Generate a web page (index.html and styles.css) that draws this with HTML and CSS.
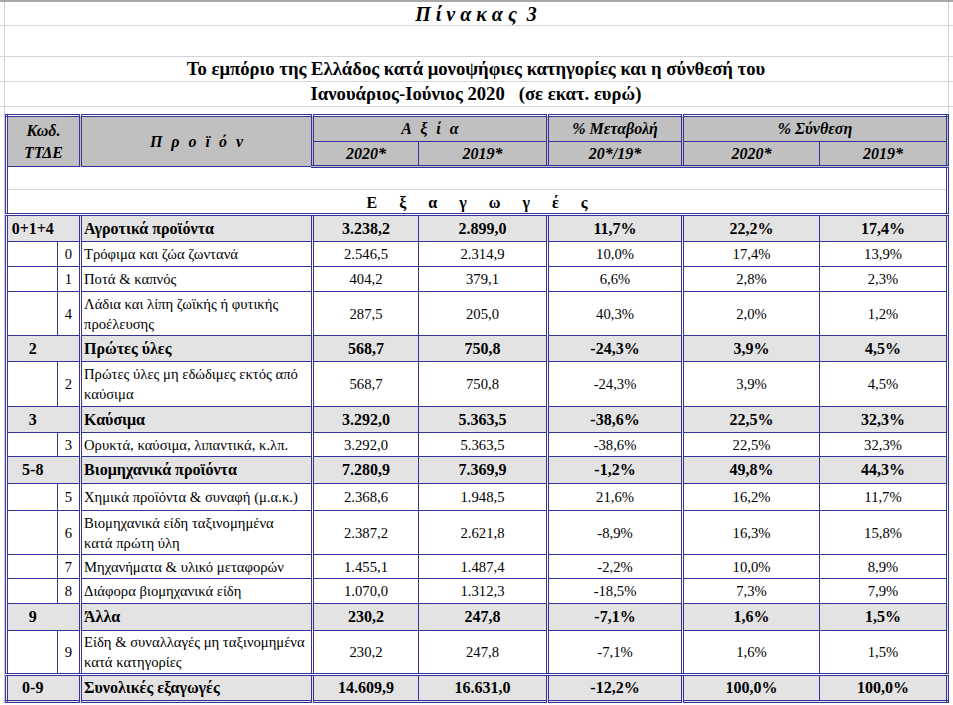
FILE: index.html
```html
<!DOCTYPE html>
<html lang="el">
<head>
<meta charset="UTF-8">
<title>Πίνακας 3</title>
<link rel="stylesheet" href="styles.css">
</head>
<body>
<div class="sheet-row r1"><span class="caption">Π ί ν α κ α ς&nbsp; 3</span></div>
<div class="sheet-row r2"></div>
<div class="sheet-row r3"><span class="title">Το εμπόριο της Ελλάδος κατά μονοψήφιες κατηγορίες και η σύνθεσή του</span></div>
<div class="sheet-row r4"><span class="title">Ιανουάριος-Ιούνιος 2020&nbsp;&nbsp; (σε εκατ. ευρώ)</span></div>

<table class="data">
    <colgroup>
        <col class="c-code">
        <col class="c-sub">
        <col class="c-name">
        <col class="c-v20">
        <col class="c-v19">
        <col class="c-chg">
        <col class="c-s20">
        <col class="c-s19">
    </colgroup>
    <thead>
        <tr class="h1">
            <th colspan="2" rowspan="2" class="kod">Κωδ.<br>ΤΤΔΕ</th>
            <th rowspan="2" class="wide">Π ρ ο ϊ ό ν</th>
            <th colspan="2" class="wide">Α ξ ί α</th>
            <th>% Μεταβολή</th>
            <th colspan="2">% Σύνθεση</th>
        </tr>
        <tr class="h2">
            <th>2020*</th>
            <th>2019*</th>
            <th>20*/19*</th>
            <th>2020*</th>
            <th>2019*</th>
        </tr>
    </thead>
    <tbody>
        <tr class="gap"><td colspan="8"></td></tr>
        <tr class="section"><td colspan="8">Ε ξ α γ ω γ έ ς</td></tr>

        <tr class="group r-27">
            <td class="code">0+1+4</td><td class="sub"></td>
            <td class="name">Αγροτικά προϊόντα</td>
            <td>3.238,2</td><td>2.899,0</td><td>11,7%</td><td>22,2%</td><td>17,4%</td>
        </tr>
        <tr class="item r-25">
            <td class="code"></td><td class="sub">0</td>
            <td class="name">Τρόφιμα και ζώα ζωντανά</td>
            <td>2.546,5</td><td>2.314,9</td><td>10,0%</td><td>17,4%</td><td>13,9%</td>
        </tr>
        <tr class="item r-25">
            <td class="code"></td><td class="sub">1</td>
            <td class="name">Ποτά &amp; καπνός</td>
            <td>404,2</td><td>379,1</td><td>6,6%</td><td>2,8%</td><td>2,3%</td>
        </tr>
        <tr class="item r-44">
            <td class="code"></td><td class="sub">4</td>
            <td class="name">Λάδια και λίπη ζωϊκής ή φυτικής<br>προέλευσης</td>
            <td>287,5</td><td>205,0</td><td>40,3%</td><td>2,0%</td><td>1,2%</td>
        </tr>

        <tr class="group r-26">
            <td class="code">2</td><td class="sub"></td>
            <td class="name">Πρώτες ύλες</td>
            <td>568,7</td><td>750,8</td><td>-24,3%</td><td>3,9%</td><td>4,5%</td>
        </tr>
        <tr class="item r-45">
            <td class="code"></td><td class="sub">2</td>
            <td class="name">Πρώτες ύλες μη εδώδιμες εκτός από<br>καύσιμα</td>
            <td>568,7</td><td>750,8</td><td>-24,3%</td><td>3,9%</td><td>4,5%</td>
        </tr>

        <tr class="group r-26">
            <td class="code">3</td><td class="sub"></td>
            <td class="name">Καύσιμα</td>
            <td>3.292,0</td><td>5.363,5</td><td>-38,6%</td><td>22,5%</td><td>32,3%</td>
        </tr>
        <tr class="item r-24">
            <td class="code"></td><td class="sub">3</td>
            <td class="name">Ορυκτά, καύσιμα, λιπαντικά, κ.λπ.</td>
            <td>3.292,0</td><td>5.363,5</td><td>-38,6%</td><td>22,5%</td><td>32,3%</td>
        </tr>

        <tr class="group r-27">
            <td class="code">5-8</td><td class="sub"></td>
            <td class="name">Βιομηχανικά προϊόντα</td>
            <td>7.280,9</td><td>7.369,9</td><td>-1,2%</td><td>49,8%</td><td>44,3%</td>
        </tr>
        <tr class="item r-27">
            <td class="code"></td><td class="sub">5</td>
            <td class="name">Χημικά προϊόντα &amp; συναφή (μ.α.κ.)</td>
            <td>2.368,6</td><td>1.948,5</td><td>21,6%</td><td>16,2%</td><td>11,7%</td>
        </tr>
        <tr class="item r-44">
            <td class="code"></td><td class="sub">6</td>
            <td class="name">Βιομηχανικά είδη ταξινομημένα<br>κατά πρώτη ύλη</td>
            <td>2.387,2</td><td>2.621,8</td><td>-8,9%</td><td>16,3%</td><td>15,8%</td>
        </tr>
        <tr class="item r-24">
            <td class="code"></td><td class="sub">7</td>
            <td class="name">Μηχανήματα &amp; υλικό μεταφορών</td>
            <td>1.455,1</td><td>1.487,4</td><td>-2,2%</td><td>10,0%</td><td>8,9%</td>
        </tr>
        <tr class="item r-25">
            <td class="code"></td><td class="sub">8</td>
            <td class="name">Διάφορα βιομηχανικά είδη</td>
            <td>1.070,0</td><td>1.312,3</td><td>-18,5%</td><td>7,3%</td><td>7,9%</td>
        </tr>

        <tr class="group r-27">
            <td class="code">9</td><td class="sub"></td>
            <td class="name">Άλλα</td>
            <td>230,2</td><td>247,8</td><td>-7,1%</td><td>1,6%</td><td>1,5%</td>
        </tr>
        <tr class="item r-44">
            <td class="code"></td><td class="sub">9</td>
            <td class="name">Είδη &amp; συναλλαγές μη ταξινομημένα<br>κατά κατηγορίες</td>
            <td>230,2</td><td>247,8</td><td>-7,1%</td><td>1,6%</td><td>1,5%</td>
        </tr>

        <tr class="group total r-27">
            <td class="code">0-9</td><td class="sub"></td>
            <td class="name">Συνολικές εξαγωγές</td>
            <td>14.609,9</td><td>16.631,0</td><td>-12,2%</td><td>100,0%</td><td>100,0%</td>
        </tr>
    </tbody>
</table>
</body>
</html>
```

FILE: styles.css
```css
*{
    margin: 0;
    padding: 0;
}
body{
    width: 953px;
    font-family: "Liberation Serif", "Times New Roman", serif;
    color: #000;
    background:
        linear-gradient(#d0d0d0, #d0d0d0) 4px 0 / 1px 100% no-repeat,
        linear-gradient(#d0d0d0, #d0d0d0) 948px 0 / 1px 100% no-repeat,
        #fff;
}

/* rows above the table, like spreadsheet rows */
.sheet-row{
    display: flex;
    justify-content: center;
    align-items: flex-end;
    padding: 0 5px 0 4px;
    border-bottom: 1px solid #d4d4d4;
    font-weight: bold;
    white-space: pre;
}
.r1{
    height: 23px;
    border-top: 2px solid #a8a8a8;
}
.r2{
    height: 30px;
}
.r3, .r4{
    height: 22px;
    padding-bottom: 2px;
}
.caption{
    font-size: 20px;
    font-style: italic;
    line-height: 22px;
}
.title{
    font-size: 18.67px;
    line-height: 20px;
}

/* the table */
.data{
    margin: 7px 0 0 5px;
    width: 944px;
    table-layout: fixed;
    border-collapse: collapse;
    border: 3px double #333399;
}
.data col.c-code{ width: 51px; }
.data col.c-sub{ width: 23px; }
.data col.c-name{ width: 232px; border-left: 3px double #333399; }
.data col.c-v20{ width: 106px; border-left: 3px double #333399; }
.data col.c-v19{ width: 129px; }
.data col.c-chg{ width: 135px; border-left: 3px double #333399; }
.data col.c-s20{ width: 137px; border-left: 3px double #333399; }
.data col.c-s19{ width: 128px; }

.data th, .data td{
    border: 1px solid #333399;
    padding: 0 2px;
    text-align: center;
    vertical-align: middle;
    white-space: nowrap;
}

.data th{
    background: #c0c0c0;
    font-size: 16px;
    font-style: italic;
    font-weight: bold;
}
.data .h1{ height: 26px; }
.data .h2{ height: 25px; }
.data .h2 th{ border-bottom: 3px double #333399; }
.data th.kod{ line-height: 22px; }
.data th.wide{ word-spacing: 5px; }

.data .gap{ height: 23px; }
.data .gap td{ border-bottom: 1px solid #d4d4d4; }
.data .section{ height: 25px; }
.data .section td{
    border-top: 1px solid #d4d4d4;
    border-bottom: 3px double #333399;
    vertical-align: bottom;
    font-size: 16px;
    font-weight: bold;
    line-height: 20px;
    word-spacing: 18px;
}

.data .item td{
    font-size: 14.67px;
    line-height: 20px;
}
.data .group td{
    background: #e3e3e3;
    font-size: 16px;
    font-weight: bold;
}
.data .group td.code{ border-right: hidden; }
.data .group td.sub{ border-left: hidden; }
.data .total td{ border-top: 3px double #333399; }

.data td.name{
    text-align: left;
    padding-left: 2px;
}

.r-24{ height: 24px; }
.r-25{ height: 25px; }
.r-26{ height: 26px; }
.r-27{ height: 27px; }
.r-44{ height: 44px; }
.r-45{ height: 45px; }
```
